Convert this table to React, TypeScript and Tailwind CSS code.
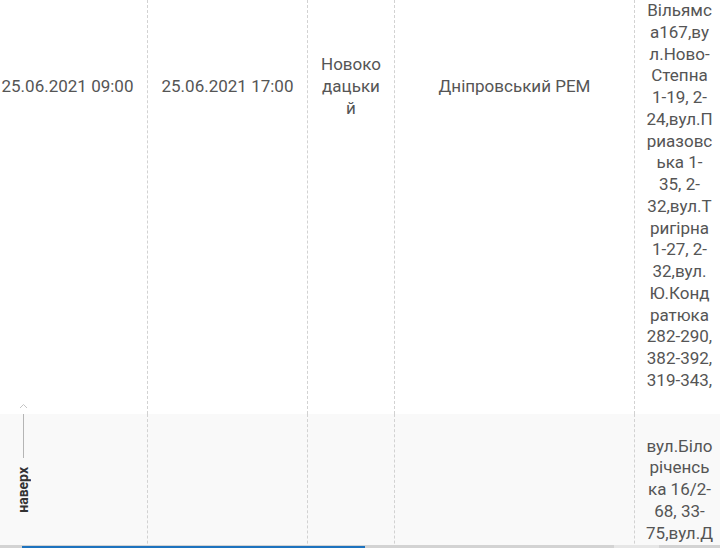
import { type ReactNode } from "react";

const font = { fontFamily: "Roboto, 'Noto Sans', sans-serif" };

const addr1 = [
  "Вільямс",
  "а167,ву",
  "л.Ново-",
  "Степна",
  "1-19, 2-",
  "24,вул.П",
  "риазовс",
  "ька 1-",
  "35, 2-",
  "32,вул.Т",
  "ригірна",
  "1-27, 2-",
  "32,вул.",
  "Ю.Конд",
  "ратюка",
  "282-290,",
  "382-392,",
  "319-343,",
];

const addr2 = ["вул.Біло", "річенсь", "ка 16/2-", "68, 33-", "75,вул.Д"];

function Cell({ children, className = "" }: { children?: ReactNode; className?: string }) {
  return (
    <div
      className={`flex items-center justify-center border-r border-dashed border-[#d2d2d2] text-center ${className}`}
    >
      {children}
    </div>
  );
}

function Lines({ lines }: { lines: string[] }) {
  return (
    <div className="flex flex-col items-center">
      {lines.map((l, i) => (
        <span key={i} className="whitespace-pre">
          {l}
        </span>
      ))}
    </div>
  );
}

export default function App() {
  return (
    <div
      className="relative h-[548px] w-[720px] overflow-hidden bg-white text-[17px] leading-[21.75px] text-[#555]"
      style={font}
    >
      <div className="grid w-[724px] grid-cols-[148px_160px_87px_240px_89px]">
        {/* first row */}
        <Cell className="pb-[240px] pr-3">25.06.2021 09:00</Cell>
        <Cell className="pb-[240px]">25.06.2021 17:00</Cell>
        <Cell className="pb-[240px]">
          <Lines lines={["Новоко", "дацьки", "й"]} />
        </Cell>
        <Cell className="pb-[240px]">Дніпровський РЕМ</Cell>
        <div className="flex justify-center pb-[22px] text-center">
          <Lines lines={addr1} />
        </div>

        {/* second row */}
        <Cell className="h-[160px] bg-[#f9f9f9]" />
        <Cell className="bg-[#f9f9f9]" />
        <Cell className="bg-[#f9f9f9]" />
        <Cell className="bg-[#f9f9f9]" />
        <div className="flex justify-center bg-[#f9f9f9] pt-[22px] text-center">
          <Lines lines={addr2} />
        </div>
      </div>

      {/* back to top */}
      <div className="absolute left-[15px] top-[403px] flex w-[16px] flex-col items-center">
        <svg width="9" height="6" viewBox="0 0 9 6" fill="none">
          <path d="M1 5 4.5 1.5 8 5" stroke="#c4c4c4" strokeWidth="1" />
        </svg>
        <div className="mt-[5px] h-[44px] w-px bg-[#b5b5b5]" />
        <span className="mt-[9px] rotate-180 text-[14px] font-bold leading-none text-[#333] [writing-mode:vertical-rl]">
          наверх
        </span>
      </div>

      {/* horizontal scroll indicator */}
      <div className="absolute bottom-0 left-0 h-[3px] w-full bg-[#d3d3d3]">
        <div className="absolute bottom-0 left-[22px] h-[2px] w-[343px] bg-[#1e73be]" />
        <div className="absolute bottom-0 left-[614px] h-[3px] w-[45px] bg-[#e6e6e6]" />
      </div>
    </div>
  );
}
